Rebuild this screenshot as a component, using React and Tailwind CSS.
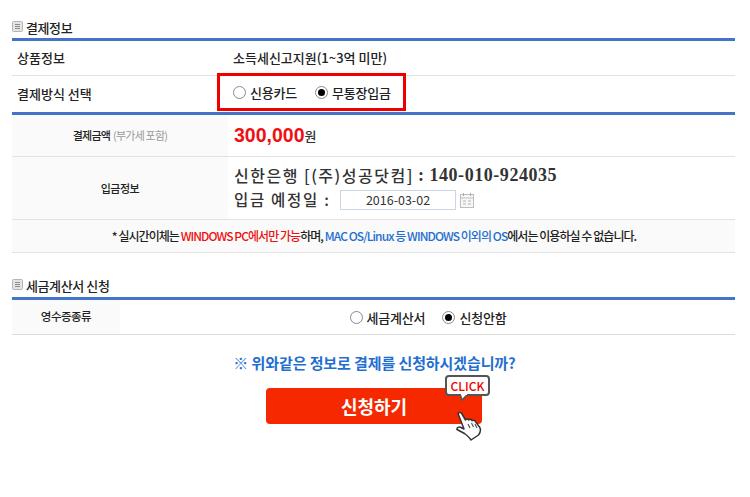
import React from 'react';

const KR = "font-['Noto_Sans_CJK_KR','Noto_Sans',sans-serif]";

const SectionTitle = ({ children, className }) => (
  <div className={`flex items-center gap-[3px] ${className}`}>
    <svg width="11" height="11" viewBox="0 0 11 11" className="mt-[2px] shrink-0">
      <rect x="0.5" y="0.5" width="10" height="10" rx="1" fill="#e4e4e4" stroke="#b5b5b5" />
      <path d="M3 3.5h5M3 5.5h5M3 7.5h5" stroke="#8d8d8d" strokeWidth="1" />
    </svg>
    <span className="mt-[4px] text-[13px] font-medium leading-none tracking-[-0.4px] text-[#222]">{children}</span>
  </div>
);

const Radio = ({ checked }) => (
  <span className="flex h-[13px] w-[13px] shrink-0 items-center justify-center rounded-full border border-[#8a8a8a] bg-white">
    {checked && <span className="h-[7px] w-[7px] rounded-full bg-black" />}
  </span>
);

const RadioLabel = ({ checked, children }) => (
  <span className="flex items-center gap-[4px]">
    <Radio checked={checked} />
    <span className="text-[13px] font-medium leading-none tracking-[-0.2px] text-[#222]">{children}</span>
  </span>
);

const App = () => {
  return (
    <div className={`h-[497px] w-[750px] overflow-hidden bg-white ${KR}`}>
      <div className="ml-[12px] w-[723px] pt-[19px]">
        <SectionTitle className="h-[12px]">결제정보</SectionTitle>

        {/* 결제정보 */}
        <div className="mt-[7px] h-[3px] bg-[#4374c7]" />
        <div className="flex h-[35px] items-center border-b border-[#e2e2e2] text-[13px] text-[#222]">
          <div className="w-[221px] pl-[5px] font-medium">상품정보</div>
          <div className="font-medium">소득세신고지원(1~3억 미만)</div>
        </div>
        <div className="flex h-[36px] items-start text-[13px] text-[#222]">
          <div className="flex h-[36px] w-[205px] items-center pl-[5px] font-medium">결제방식 선택</div>
          <div className="-mt-[3px] flex h-[38px] w-[189px] items-center gap-[18px] border-[3px] border-[#ee0000] bg-white pl-[13px]">
            <RadioLabel>신용카드</RadioLabel>
            <RadioLabel checked>무통장입금</RadioLabel>
          </div>
        </div>
        <div className="h-[3px] bg-[#4374c7]" />

        <div className="flex h-[42px] border-b border-[#e2e2e2]">
          <div className="flex w-[216px] items-center justify-center bg-[#fafafa] text-[11px] tracking-[-0.8px]">
            <span className="font-medium text-[#222]">결제금액</span>
            <span className="ml-[3px] text-[#999]">(부가세 포함)</span>
          </div>
          <div className="flex items-center pl-[6px]">
            <span className="font-['Liberation_Sans',sans-serif] text-[19.5px] font-bold text-[#ee1111]">300,000</span>
            <span className="text-[13px] font-medium text-[#333]">원</span>
          </div>
        </div>

        <div className="flex h-[63px] border-b border-[#e2e2e2]">
          <div className="flex w-[216px] items-center justify-center bg-[#fafafa] text-[11px] font-medium tracking-[-0.5px] text-[#222]">
            입금정보
          </div>
          <div className="flex flex-col justify-center pl-[6px] text-[#333]">
            <div className="flex h-[22px] items-center font-['Liberation_Serif',serif] text-[18px] font-bold leading-none tracking-[0.55px]">
              <span className={`${KR} text-[16px] font-medium tracking-[1.5px]`}>신한은행 [(주)성공닷컴]</span>
              <span className="ml-[4px]">: 140-010-924035</span>
            </div>
            <div className="mt-[2px] flex h-[24px] items-center">
              <span className="w-[106px] text-[15.5px] font-medium leading-none tracking-[1.7px]">입금 예정일 :</span>
              <div className="flex h-[20px] w-[116px] items-center justify-center border border-[#c9d6e6] bg-white text-[12.5px] text-[#333]">
                2016-03-02
              </div>
              <svg width="14" height="15" viewBox="0 0 14 15" className="ml-[4px]">
                <rect x="0.5" y="1.5" width="13" height="13" fill="#f7f7f7" stroke="#bdbdbd" />
                <path d="M1 5h12" stroke="#bdbdbd" />
                <path d="M3.5 0v3M10.5 0v3" stroke="#a8a8a8" />
                <path d="M3 8h3M8 8h3M3 11h3M8 11h3" stroke="#b0b0b0" />
              </svg>
            </div>
          </div>
        </div>

        <div className="flex h-[33px] items-center justify-center border-b border-[#e2e2e2] bg-[#fafafa] pl-[1px] text-[12px] font-medium tracking-[-0.95px] text-[#222]">
          <span>* 실시간이체는&nbsp;</span>
          <span className="text-[#ee1111]">WINDOWS PC에서만 가능</span>
          <span>하며,&nbsp;</span>
          <span className="text-[#1f6fd0]">MAC OS/Linux 등 WINDOWS 이외의 OS</span>
          <span>에서는 이용하실 수 없습니다.</span>
        </div>

        {/* 세금계산서 신청 */}
        <SectionTitle className="mt-[24px] h-[12px]">세금계산서 신청</SectionTitle>
        <div className="mt-[8px] h-[3px] bg-[#4374c7]" />
        <div className="flex h-[35px] border-b border-[#dcdcdc]">
          <div className="flex w-[108px] items-center justify-center bg-[#fafafa] text-[11.5px] font-medium tracking-[-0.5px] text-[#222]">
            영수증종류
          </div>
          <div className="flex flex-1 items-center justify-center gap-[17px] pl-[1px]">
            <RadioLabel>세금계산서</RadioLabel>
            <RadioLabel checked>신청안함</RadioLabel>
          </div>
        </div>

        <div className="mt-[19px] pl-[2px] text-center text-[15px] font-semibold leading-[18px] tracking-[-0.1px] text-[#1f6fd0]">
          ※ 위와같은 정보로 결제를 신청하시겠습니까?
        </div>

        {/* 신청 버튼 */}
        <div className="mt-[16px] flex justify-center pl-[1px]">
          <div className="relative flex h-[36px] w-[216px] items-center justify-center rounded-[4px] bg-[#f52800] text-[18px] font-bold text-white">
            신청하기
            <div className="absolute left-[179px] top-[-13px] flex h-[21px] w-[45px] items-center justify-center rounded-[4px] border-[2px] border-[#555] bg-white text-[12px] font-medium leading-none text-[#ee0000]">
              CLICK
            </div>
            <svg width="12" height="8" viewBox="0 0 12 8" className="absolute left-[193px] top-[6px]">
              <path d="M1 0 L3 6 L9 0" fill="#fff" stroke="#555" strokeWidth="1.6" />
              <path d="M2 0h6" stroke="#fff" strokeWidth="2" />
            </svg>
            <svg width="28" height="30" viewBox="0 0 28 30" className="absolute left-[190px] top-[23px]">
              <path
                d="M2 2.5 C3.5 0.8 5 1.5 6 3 L9.5 9 C10 7.8 11.8 7.6 12.6 9 C13.2 8 15.2 7.8 16 9.6 C16.8 8.8 18.6 9 19.4 10.6 L23.5 16 C25.5 19 24 22 22.5 24 L15 29 C13.5 26.5 11 24.5 8.5 22.5 L1 18.5 C0.5 16.5 3 15.5 5 16.5 L8 18 Z"
                fill="#fff"
                stroke="#333"
                strokeWidth="1.5"
                strokeLinejoin="round"
              />
              <path d="M12 13l2 4M15.5 12l2 4M19 13l2 4" stroke="#555" strokeWidth="1.2" />
            </svg>
          </div>
        </div>
      </div>
    </div>
  );
};

export default App;
